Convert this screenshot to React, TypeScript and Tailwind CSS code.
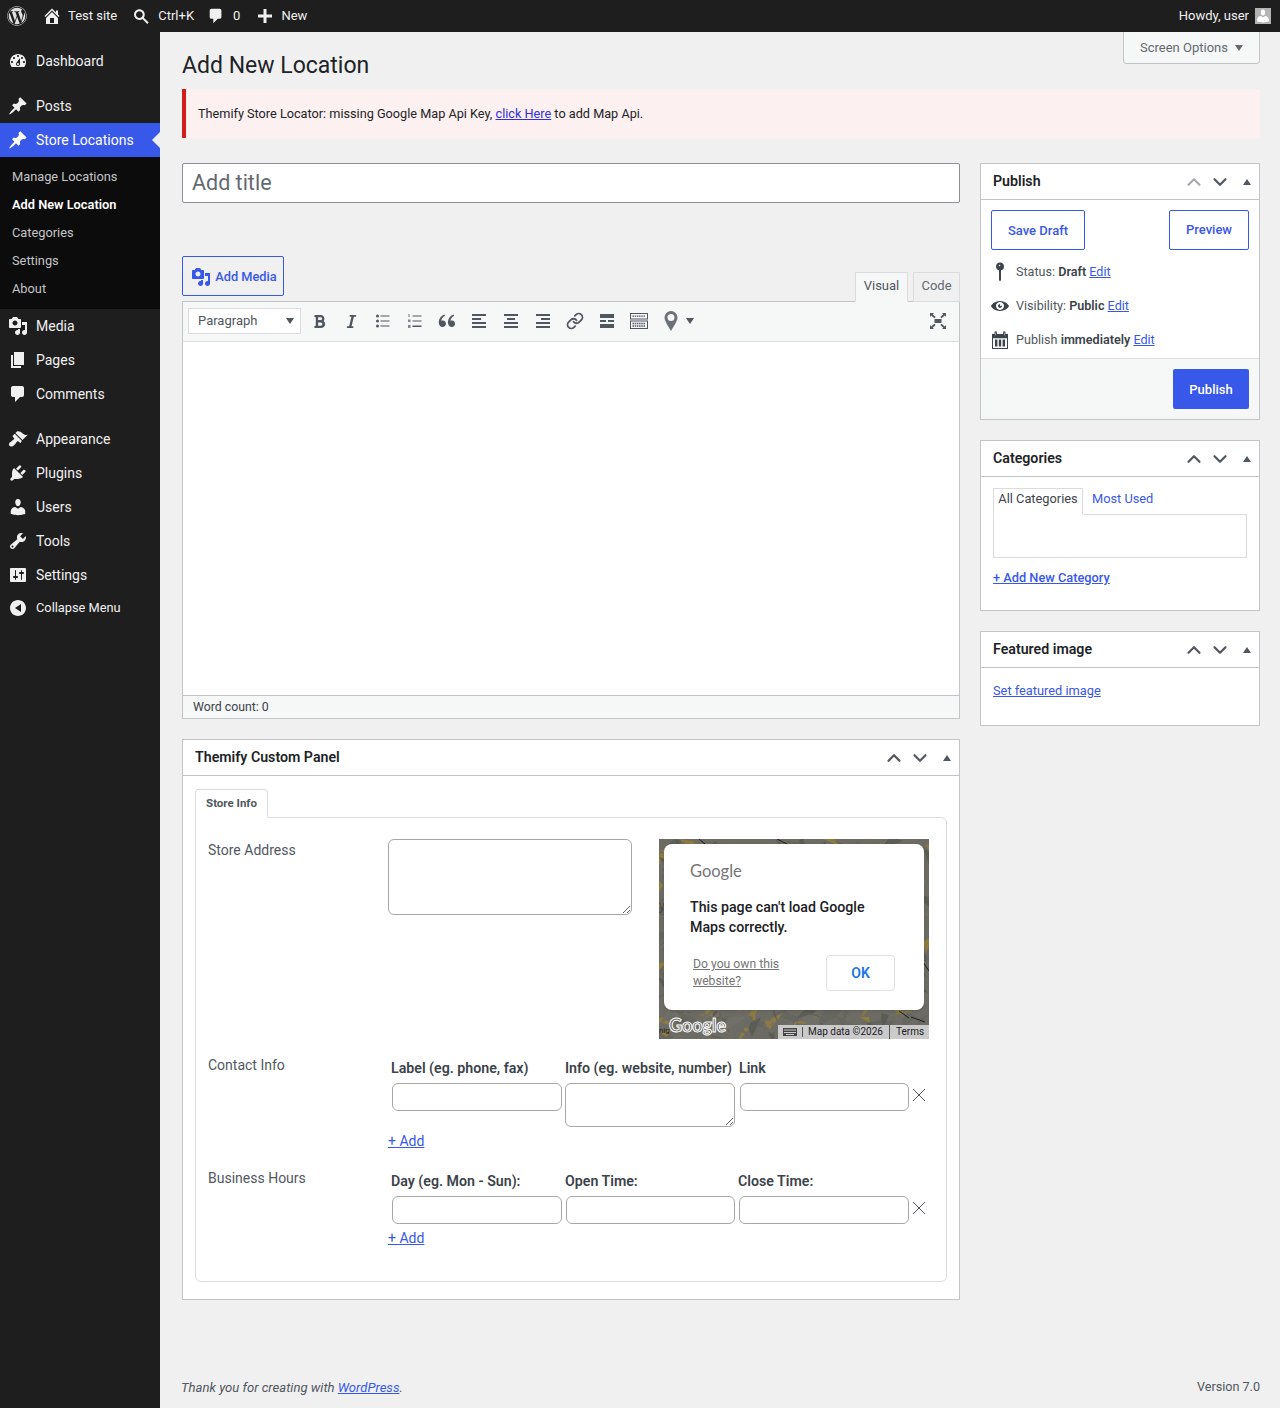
import type { ReactNode } from 'react';
import { ChevronDown, ChevronUp, Link as LinkIcon } from 'lucide-react';
import { FaBold, FaItalic, FaWordpress } from 'react-icons/fa';
import { RiDoubleQuotesL } from 'react-icons/ri';

const paths = {
  home: 'M16 8.5l1.53 1.53-1.06 1.06L10 4.62l-6.47 6.47-1.06-1.06L10 2.5l4 4v-2h2v4zm-6-2.46l6 5.99V18H4v-5.97zM12 17v-5H8v5h4z',
  pin: 'M10.44 3.02l1.82-1.82 6.36 6.35-1.83 1.82c-1.05-.68-2.48-.57-3.41.36l-.75.75c-.92.93-1.04 2.35-.35 3.41l-1.83 1.82-2.41-2.41-2.8 2.79c-.42.42-3.38 2.71-3.8 2.29s1.86-3.39 2.28-3.81l2.79-2.79L4.1 9.36l1.83-1.82c1.05.69 2.48.57 3.4-.36l.75-.75c.93-.92 1.05-2.35.36-3.41z',
  dashboard: 'M3.76 16h12.48c1.1-1.37 1.76-3.11 1.76-5 0-4.42-3.58-8-8-8s-8 3.58-8 8c0 1.89.66 3.63 1.76 5zM10 4c.55 0 1 .45 1 1s-.45 1-1 1-1-.45-1-1 .45-1 1-1zM6 6c.55 0 1 .45 1 1s-.45 1-1 1-1-.45-1-1 .45-1 1-1zm8 0c.55 0 1 .45 1 1s-.45 1-1 1-1-.45-1-1 .45-1 1-1zm-5.37 5.55L12 7v6c0 1.1-.9 2-2 2s-2-.9-2-2c0-.57.24-1.08.63-1.45zM4 10c.55 0 1 .45 1 1s-.45 1-1 1-1-.45-1-1 .45-1 1-1zm12 0c.55 0 1 .45 1 1s-.45 1-1 1-1-.45-1-1 .45-1 1-1zm-5 3c0-.55-.45-1-1-1s-1 .45-1 1 .45 1 1 1 1-.45 1-1z',
  media: 'M13 11V4c0-.55-.45-1-1-1h-1.67L9 1H5L3.67 3H2c-.55 0-1 .45-1 1v7c0 .55.45 1 1 1h10c.55 0 1-.45 1-1zM7 4.5c1.38 0 2.5 1.12 2.5 2.5S8.38 9.5 7 9.5 4.5 8.38 4.5 7 5.62 4.5 7 4.5zM14 6h5v10.5c0 1.38-1.12 2.5-2.5 2.5S14 17.88 14 16.5s1.12-2.5 2.5-2.5c.17 0 .34.02.5.05V9h-3V6zm-4 8.05V13h2v3.5c0 1.38-1.12 2.5-2.5 2.5S7 17.88 7 16.5 8.12 14 9.5 14c.17 0 .34.02.5.05z',
  page: 'M6 15V2h10v13H6zm-1 1h8v2H3V5h2v11z',
  comment: 'M5 2h9c1.1 0 2 .9 2 2v7c0 1.1-.9 2-2 2h-2l-5 5v-5H5c-1.1 0-2-.9-2-2V4c0-1.1.9-2 2-2z',
  appearance: 'M14.48 11.06L7.41 3.99l1.5-1.5c.5-.56 2.3-.47 3.51.32 1.21.8 1.43 1.28 2.91 2.1 1.18.64 2.45 1.26 4.45.85zm-.71.71L6.7 4.7 4.93 6.47c-.39.39-.39 1.02 0 1.41l1.06 1.06c.39.39.39 1.03 0 1.42-.6.6-1.43 1.11-2.21 1.69-.35.26-.7.53-1.01.84C1.43 13.23 1 14.13 1 15.5c0 1.1.9 2 2 2 1.37 0 2.27-.43 3.61-1.77.31-.31.58-.66.84-1.01.58-.78 1.09-1.61 1.69-2.21.39-.39 1.03-.39 1.42 0l1.06 1.06c.39.39 1.02.39 1.41 0z',
  plugins: 'M13.11 4.36L9.87 7.6 8 5.73l3.24-3.24c.35-.34 1.05-.2 1.56.32.52.51.66 1.21.31 1.55zm-8 1.77l.91-1.12 9.01 9.01-1.19.84c-.71.71-2.63 1.16-3.82 1.16H6.14L4.9 17.26c-.59.59-1.54.59-2.12 0-.59-.58-.59-1.53 0-2.12l1.24-1.24v-3.88c0-1.13.4-3.19 1.09-3.89zm7.26 3.97l3.24-3.24c.34-.35 1.04-.21 1.55.31.52.51.66 1.21.31 1.55l-3.24 3.25z',
  users: 'M10 9.25c-2.27 0-2.73-3.44-2.73-3.44C7 4.02 7.82 2 9.97 2c2.16 0 2.98 2.02 2.71 3.81 0 0-.41 3.44-2.68 3.44zm0 2.57L12.72 10c2.39 0 4.52 2.33 4.52 4.53v2.49s-3.65 1.13-7.24 1.13c-3.65 0-7.24-1.13-7.24-1.13v-2.49c0-2.25 1.94-4.48 4.47-4.48z',
  tools: 'M16.68 9.77c-1.34 1.34-3.3 1.67-4.95.99l-5.41 6.52c-.99.99-2.59.99-3.58 0s-.99-2.59 0-3.57l6.52-5.42c-.68-1.65-.35-3.61.99-4.95 1.28-1.28 3.12-1.62 4.72-1.06l-2.89 2.89 2.82 2.82 2.86-2.87c.53 1.58.18 3.39-1.08 4.65zM3.81 16.21c.4.39 1.04.39 1.43 0 .4-.4.4-1.04 0-1.43-.39-.4-1.03-.4-1.43 0-.39.39-.39 1.03 0 1.43z',
  settings: 'M18 16V4c0-.55-.45-1-1-1H3c-.55 0-1 .45-1 1v12c0 .55.45 1 1 1h14c.55 0 1-.45 1-1zM8 11h1c.55 0 1 .45 1 1s-.45 1-1 1H8v1.5c0 .28-.22.5-.5.5s-.5-.22-.5-.5V13H6c-.55 0-1-.45-1-1s.45-1 1-1h1V5.5c0-.28.22-.5.5-.5s.5.22.5.5V11zm5-2h-1c-.55 0-1-.45-1-1s.45-1 1-1h1V5.5c0-.28.22-.5.5-.5s.5.22.5.5V7h1c.55 0 1 .45 1 1s-.45 1-1 1h-1v5.5c0 .28-.22.5-.5.5s-.5-.22-.5-.5V9z',
  collapse: 'M18 10c0-4.42-3.58-8-8-8s-8 3.58-8 8 3.58 8 8 8 8-3.58 8-8zm-5 4l-6-4 6-4v8z',
  search: 'M12.14 4.78c1.87 1.87 2.11 4.75.72 6.88l4.83 4.83-1.41 1.41-4.83-4.83c-2.13 1.39-5.01 1.15-6.88-.72-2.15-2.15-2.15-5.62 0-7.57 2.15-2.15 5.42-2.15 7.57 0zm-1.41 1.41c-1.37-1.37-3.37-1.37-4.74 0s-1.37 3.37 0 4.74 3.37 1.37 4.74 0 1.37-3.37 0-4.74z',
  plus: 'M17 8.5h-5.5V3h-3v5.5H3v3h5.5V17h3v-5.5H17z',
  eye: 'M10 4.4C3.439 4.4 0 9.232 0 10c0 .766 3.439 5.6 10 5.6 6.56 0 10-4.834 10-5.6 0-.768-3.44-5.6-10-5.6zm0 9.907c-2.455 0-4.445-1.928-4.445-4.307S7.545 5.691 10 5.691s4.444 1.93 4.444 4.309-1.989 4.307-4.444 4.307zM10 10c-.407-.447.663-2.154 0-2.154-1.228 0-2.223.965-2.223 2.154s.995 2.154 2.223 2.154c1.227 0 2.223-.965 2.223-2.154 0-.547-1.877.379-2.223 0z',
  status: 'M10 .5a4 4 0 0 1 1 7.87V18l-1 1.5-1-1.5V8.370A4 4 0 0 1 10 .5zm-.5 2.200a.8.8 0 1 0 0 1.600.8.8 0 0 0 0-1.600z',
};

function Dash({ d, className }: { d: string; className: string }) {
  return (
    <svg viewBox="0 0 20 20" className={className} fill="currentColor" fillRule="evenodd">
      <path d={d} />
    </svg>
  );
}

function TopItem({ icon, label, gap = 'gap-2' }: { icon: string; label: string; gap?: string }) {
  return (
    <div className={`flex items-center ${gap}`}>
      <Dash d={icon} className="h-5 w-5 text-[#f0f0f1]" />
      <span>{label}</span>
    </div>
  );
}

function AdminBar() {
  return (
    <div className="flex h-8 items-center bg-[#1e1e1e] pl-[7px] pr-[9px] text-[13px] text-[#f0f0f1]">
      <FaWordpress className="mr-[15px] h-5 w-5 text-[#e0e0e0]" />
      <TopItem icon={paths.home} label="Test site" gap="gap-[6px]" />
      <div className="ml-[14px]">
        <TopItem icon={paths.search} label="Ctrl+K" gap="gap-[7px]" />
      </div>
      <div className="ml-[13px] flex items-center gap-[8px]">
        <Dash d={paths.comment} className="h-[18px] w-[18px] text-[#f0f0f1]" />
        <span>0</span>
      </div>
      <div className="ml-[15px]">
        <TopItem icon={paths.plus} label="New" gap="gap-[6px]" />
      </div>
      <div className="ml-auto flex items-center gap-[6px]">
        <span>Howdy, user</span>
        <div className="flex h-4 w-4 items-end justify-center overflow-hidden bg-[#b4b4b4]">
          <Dash d={paths.users} className="h-4 w-4 text-white" />
        </div>
      </div>
    </div>
  );
}

function MenuItem({ icon, label, active }: { icon: string; label: string; active?: boolean }) {
  return (
    <div className={`relative flex h-[34px] items-center text-[14px] ${active ? 'bg-[#3858e9] text-white' : 'text-[#f0f0f1]'}`}>
      <Dash d={icon} className={`ml-[8px] mr-[8px] h-5 w-5 ${active ? 'text-white' : 'text-[#f0f0f1]'}`} />
      <span>{label}</span>
      {active && (
        <div className="absolute right-0 top-[9px] h-0 w-0 border-y-[8px] border-r-[8px] border-y-transparent border-r-[#f0f0f1]" />
      )}
    </div>
  );
}

function Sidebar() {
  const sub = ['Manage Locations', 'Add New Location', 'Categories', 'Settings', 'About'];
  return (
    <aside className="w-40 shrink-0 bg-[#1e1e1e] pt-3">
      <MenuItem icon={paths.dashboard} label="Dashboard" />
      <div className="h-[11px]" />
      <MenuItem icon={paths.pin} label="Posts" />
      <MenuItem icon={paths.pin} label="Store Locations" active />
      <div className="bg-[#0c0c0c] py-[6px] text-[12.8px]">
        {sub.map((item) => (
          <div
            key={item}
            className={`flex h-7 items-center pl-3 ${item === 'Add New Location' ? 'font-semibold text-white' : 'text-[#c3c4c7]'}`}
          >
            {item}
          </div>
        ))}
      </div>
      <MenuItem icon={paths.media} label="Media" />
      <MenuItem icon={paths.page} label="Pages" />
      <MenuItem icon={paths.comment} label="Comments" />
      <div className="h-[11px]" />
      <MenuItem icon={paths.appearance} label="Appearance" />
      <MenuItem icon={paths.plugins} label="Plugins" />
      <MenuItem icon={paths.users} label="Users" />
      <MenuItem icon={paths.tools} label="Tools" />
      <MenuItem icon={paths.settings} label="Settings" />
      <div className="flex h-8 items-center text-[12.8px] text-[#f0f0f1]">
        <Dash d={paths.collapse} className="mx-[8px] h-5 w-5" />
        <span>Collapse Menu</span>
      </div>
    </aside>
  );
}

function Bars({ rows }: { rows: [number, number][] }) {
  return (
    <svg viewBox="0 0 20 20" className="h-5 w-5 text-[#50575e]" fill="currentColor">
      {rows.map(([x, w], i) => (
        <rect key={i} x={x} y={3 + i * 4} width={w} height="2" />
      ))}
    </svg>
  );
}

function ToolBtn({ children }: { children: ReactNode }) {
  return <div className="flex h-8 w-8 items-center justify-center text-[#50575e]">{children}</div>;
}

function Toolbar() {
  return (
    <div className="flex h-[41px] items-center border-x border-y border-[#c3c4c7] border-b-[#dcdcde] bg-[#f6f7f7] pb-[1px] pl-[5px] pr-[5px]">
      <div className="mr-[2px] flex h-[26px] w-[113px] items-center justify-between border border-[#dcdcde] bg-white pl-[9px] pr-[6px] text-[13px] text-[#50575e]">
        <span>Paragraph</span>
        <span className="h-0 w-0 border-x-[4px] border-t-[6px] border-x-transparent border-t-[#50575e]" />
      </div>
      <ToolBtn><FaBold className="h-[15px] w-[15px]" /></ToolBtn>
      <ToolBtn><FaItalic className="h-[15px] w-[15px]" /></ToolBtn>
      <ToolBtn>
        <svg viewBox="0 0 20 20" className="h-5 w-5" fill="currentColor">
          <circle cx="4.500" cy="5" r="1.500" /><circle cx="4.500" cy="10" r="1.500" /><circle cx="4.500" cy="15" r="1.500" />
          <rect x="7.500" y="4.500" width="9" height="1" /><rect x="7.500" y="9.500" width="9" height="1" /><rect x="7.500" y="14.500" width="9" height="1" />
        </svg>
      </ToolBtn>
      <ToolBtn>
        <svg viewBox="0 0 20 20" className="h-5 w-5" fill="currentColor">
          <rect x="3.500" y="3" width="1" height="3" opacity=".8" /><rect x="3" y="8.500" width="2.500" height="2.500" opacity=".7" /><rect x="3" y="14" width="2.500" height="3" opacity=".7" />
          <rect x="7.500" y="4.500" width="9" height="1" /><rect x="7.500" y="9.500" width="9" height="1" /><rect x="7.500" y="14.500" width="9" height="1.500" />
        </svg>
      </ToolBtn>
      <ToolBtn><RiDoubleQuotesL className="h-[22px] w-[22px]" /></ToolBtn>
      <ToolBtn><Bars rows={[[3, 14], [3, 9], [3, 14], [3, 14]]} /></ToolBtn>
      <ToolBtn><Bars rows={[[3, 14], [6, 8], [3, 14], [3, 14]]} /></ToolBtn>
      <ToolBtn><Bars rows={[[3, 14], [8, 9], [3, 14], [3, 14]]} /></ToolBtn>
      <ToolBtn><LinkIcon className="h-[18px] w-[18px]" strokeWidth={2.4} /></ToolBtn>
      <ToolBtn>
        <svg viewBox="0 0 20 20" className="h-5 w-5" fill="currentColor">
          <rect x="3" y="3" width="14" height="4" /><rect x="3" y="9" width="6" height="2" /><rect x="11" y="9" width="6" height="2" /><rect x="3" y="13" width="14" height="4" />
        </svg>
      </ToolBtn>
      <ToolBtn>
        <svg viewBox="0 0 20 20" className="h-5 w-5" fill="none" stroke="currentColor">
          <rect x="1.500" y="2.500" width="17" height="5.500" />
          <rect x="1.500" y="10" width="17" height="7.500" />
          <path d="M3.500 5.200h13M3.500 12.500h13M3.500 15h13" strokeDasharray="1.500 .7" strokeWidth="1.300" />
        </svg>
      </ToolBtn>
      <div className="flex w-8 items-center justify-center text-[#6b7177]">
        <svg viewBox="0 0 20 20" className="h-5 w-5" fill="currentColor" fillRule="evenodd">
          <path d="M10 0a6.500 6.500 0 0 1 6.500 6.500c0 3.500-4 9-6.500 13.500-2.500-4.500-6.500-10-6.500-13.500A6.500 6.500 0 0 1 10 0zm0 3a3.500 3.500 0 1 0 0 7 3.500 3.500 0 0 0 0-7z" />
        </svg>
      </div>
      <span className="ml-[-1px] h-0 w-0 border-x-[4px] border-t-[6px] border-x-transparent border-t-[#50575e]" />
      <div className="ml-auto flex w-8 items-center justify-center text-[#50575e]">
        <svg viewBox="0 0 20 20" className="h-5 w-5" fill="currentColor">
          <path d="M6.500 8h7v4h-7zM2 2h4L4.700 3.300l3 2.700-1.400 1.300-3-2.700L2 6zM18 2v4l-1.300-1.400-3 2.700-1.400-1.300 3-2.700L14 2zM2 18v-4l1.300 1.400 3-2.700 1.400 1.300-3 2.700L6 18zM18 18h-4l1.300-1.300-3-2.700 1.400-1.300 3 2.700L18 14z" />
        </svg>
      </div>
    </div>
  );
}

function BoxHeader({ title, dimUp }: { title: string; dimUp?: boolean }) {
  return (
    <div className="flex h-9 items-center border-b border-[#c3c4c7] px-3">
      <h2 className="text-[14.2px] font-semibold text-[#1d2327]">{title}</h2>
      <div className="ml-auto flex items-center gap-[4px] text-[#50575e]">
        <ChevronUp className={`h-[22px] w-[22px] ${dimUp ? 'text-[#a7aaad]' : ''}`} strokeWidth={2.4} />
        <ChevronDown className="h-[22px] w-[22px]" strokeWidth={2.4} />
        <span className="ml-[8px] mr-[-4px] h-0 w-0 border-x-[4px] border-b-[6px] border-x-transparent border-b-[#50575e]" />
      </div>
    </div>
  );
}

function MetaLine({ icon, children }: { icon: ReactNode; children: ReactNode }) {
  return (
    <div className="flex h-[34px] items-center gap-[7px] text-[12.6px] text-[#50575e]">
      <span className="flex w-[18px] justify-center text-[#3c434a]">{icon}</span>
      <span>{children}</span>
    </div>
  );
}

function A({ children, className = '' }: { children: ReactNode; className?: string }) {
  return <span className={`cursor-pointer text-[#3858e9] underline ${className}`}>{children}</span>;
}

function PublishBox() {
  return (
    <div className="border border-[#c3c4c7] bg-white">
      <BoxHeader title="Publish" dimUp />
      <div className="flex justify-between px-[10px] pt-[10px]">
        <button className="h-10 w-[94px] rounded-[2px] border border-[#3858e9] pt-[1px] text-[13px] font-medium text-[#3858e9]">Save Draft</button>
        <button className="h-10 w-20 rounded-[2px] border border-[#3858e9] pb-[1px] text-[13px] font-medium text-[#3858e9]">Preview</button>
      </div>
      <div className="px-[10px] pb-[1px] pt-[5px]">
        <MetaLine icon={<Dash d={paths.status} className="h-5 w-5 shrink-0" />}>Status: <b className="font-semibold text-[#3c434a]">Draft</b> <A>Edit</A></MetaLine>
        <MetaLine icon={<Dash d={paths.eye} className="h-[18px] w-[18px] shrink-0" />}>Visibility: <b className="font-semibold text-[#3c434a]">Public</b> <A>Edit</A></MetaLine>
        <MetaLine
          icon={
            <svg viewBox="0 0 18 18" className="h-[18px] w-[18px] shrink-0" fill="currentColor">
              <path d="M1 3h2.500V1.500a1.200 1.200 0 0 1 2.400 0V3h6.200V1.500a1.200 1.200 0 0 1 2.400 0V3H17v15H1zM2 7.200V17h14V7.200zM4.600 1.500V4.500h.4V1.500zM13 1.500V4.500h.4V1.500z" fillRule="evenodd" />
              <rect x="4" y="8.500" width="2.400" height="7" /><rect x="7.800" y="8.500" width="2.400" height="7" /><rect x="11.600" y="8.500" width="2.400" height="7" />
            </svg>
          }
        >
          Publish <b className="font-semibold text-[#3c434a]">immediately</b> <A>Edit</A>
        </MetaLine>
      </div>
      <div className="flex h-[61px] justify-end border-t border-[#dcdcde] bg-[#f6f7f7] pr-[10px] pt-[10px]">
        <button className="h-10 w-[76px] rounded-[2px] bg-[#3858e9] pt-[1px] text-[13px] font-medium text-white">Publish</button>
      </div>
    </div>
  );
}

function CategoriesBox() {
  return (
    <div className="border border-[#c3c4c7] bg-white">
      <BoxHeader title="Categories" />
      <div className="px-3 pb-[23px] pt-[10px] text-[12.8px]">
        <div className="flex h-[27px] items-end">
          <div className="relative top-[1px] flex h-[27px] w-[90px] items-center justify-center border border-[#dcdcde] border-b-white bg-white pb-[5px] text-[#3c434a]">All Categories</div>
          <span className="mb-[4px] ml-[9px] self-center text-[#3858e9]">Most Used</span>
        </div>
        <div className="h-[44px] border border-[#dcdcde]" />
        <div className="mt-[10px] font-medium leading-[19px]"><A>+ Add New Category</A></div>
      </div>
    </div>
  );
}

function FeaturedBox() {
  return (
    <div className="border border-[#c3c4c7] bg-white">
      <BoxHeader title="Featured image" />
      <div className="px-3 pb-[25px] pt-[13px] text-[12.8px] leading-[19px]"><A>Set featured image</A></div>
    </div>
  );
}

const field = 'block h-[28px] rounded-[6px] border border-[#a7a7a7] bg-white';

function RowX() {
  return (
    <svg viewBox="0 0 14 14" className="ml-[3px] mt-[5px] h-[14px] w-[14px] shrink-0 text-[#50575e]" fill="none" stroke="currentColor" strokeWidth="1">
      <path d="M1 1l12 12M13 1L1 13" />
    </svg>
  );
}

// the map tiles behind the dialog, only their edges show
function mapPatches() {
  const colors = ['#5c5c56', '#77705a', '#8f7a3f', '#4f7a55', '#6b6b63', '#7d6a45', '#666660', '#8a7648', '#707068', '#5a5a5a'];
  const out: { d: string; fill: string }[] = [];
  let seed = 7;
  const next = (n: number) => {
    seed = (seed * 1103 + 12345) % 65536;
    return (seed >> 3) % n;
  };
  for (let i = 0; i < 900; i++) {
    const x = next(270);
    const y = next(200);
    out.push({ d: `M${x} ${y}l${next(40) - 20} ${next(16) - 8}l${next(30) - 15} ${next(22)}z`, fill: colors[next(colors.length)] });
  }
  return out;
}

function MapBox() {
  return (
    <div className="relative ml-[27px] h-[200px] w-[270px] shrink-0 overflow-hidden bg-[#6c6c64]">
      <svg viewBox="0 0 270 200" className="h-full w-full">
        {mapPatches().map((p, i) => <path key={i} d={p.d} fill={p.fill} />)}
        <path d="M40 0l6 5M118 0l10 5M240 172l10 7M252 178l14 5M262 120l8 12" stroke="#1c1c1c" strokeWidth="1" fill="none" />
      </svg>
      <span className="absolute left-0 top-[60px] text-[12px] leading-[14px] text-[#444]">y</span>
      <span className="absolute bottom-[2px] left-0 text-[8px] leading-[12px] text-[#222]">nig</span>
      <div className="absolute left-[5px] top-[5px] h-[166px] w-[260px] rounded-[8px] bg-white shadow-sm">
        <div className="pl-[26px] pt-[15px] font-['Lato',sans-serif] text-[16.5px] leading-[24px] text-[#757575]">Google</div>
        <p className="pl-[26px] pt-[14px] text-[14.2px] font-medium leading-[20px] text-[#202124]">This page can't load Google<br />Maps correctly.</p>
        <div className="flex items-center justify-between pl-[29px] pr-[29px] pt-[18px]">
          <span className="text-[12.2px] leading-[17px] text-[#757575] underline">Do you own this<br />website?</span>
          <button className="h-9 w-[69px] rounded-[4px] border border-[#e0e0e0] text-[14px] font-semibold text-[#1a73e8]">OK</button>
        </div>
      </div>
      <span className="absolute bottom-[3px] left-[10px] font-['Lato',sans-serif] text-[18px] font-bold leading-[22px] text-[#666] [-webkit-text-stroke:1px_white]">Google</span>
      <div className="absolute bottom-0 right-0 flex h-[14px] w-[151px] items-center bg-[#cacaca] pb-[1px] text-[10px] text-[#202124]">
        <span className="flex w-[25px] justify-center border-r border-[#555]">
          <svg viewBox="0 0 14 10" className="h-[10px] w-[14px]" fill="#444"><path d="M0 1h14v8H0zM1 2.500v1h12v-1zM1 5v1h12V5zM3 7v1h8V7z" fillRule="evenodd" /></svg>
        </span>
        <span className="w-[87px] border-r border-[#555] pl-[5px]">Map data ©2026</span>
        <span className="pl-[6px]">Terms</span>
      </div>
    </div>
  );
}

function Label({ children }: { children: ReactNode }) {
  return <div className="w-[180px] shrink-0 text-[14px] leading-[20px] text-[#50575e]">{children}</div>;
}

function CustomPanel() {
  return (
    <div className="mt-5 border border-[#c3c4c7] bg-white">
      <BoxHeader title="Themify Custom Panel" />
      <div className="px-3 pb-[17px] pt-[13px]">
        <div className="relative z-10 flex h-[29px] w-[73px] items-center justify-center rounded-t-[4px] border border-[#dcdcde] border-b-white bg-white text-[11.5px] font-bold text-[#50575e]">Store Info</div>
        <div className="mt-[-1px] h-[465px] rounded-[6px] rounded-tl-none border border-[#dcdcde] px-3 pt-[21px]">
          <div className="flex h-[216px]">
            <div className="pt-[1px]"><Label>Store Address</Label></div>
            <textarea className="h-[76px] w-[244px] rounded-[6px] border border-[#a7a7a7]" />
            <MapBox />
          </div>
          <div className="flex h-[113px]">
            <Label>Contact Info</Label>
            <div className="pt-[3px]">
              <div className="grid grid-cols-[174px_174px_174px] pl-[3px] text-[14.2px] font-semibold leading-[20px] text-[#3c434a]">
                <span>Label (eg. phone, fax)</span><span>Info (eg. website, number)</span><span>Link</span>
              </div>
              <div className="mt-[5px] flex items-start pl-[4px]">
                <input className={`${field} w-[170px]`} />
                <textarea className={`${field} ml-[3px] h-[44px] w-[170px]`} />
                <input className={`${field} ml-[5px] w-[169px]`} />
                <RowX />
              </div>
              <div className="mt-[4px] h-[20px] text-[14px] leading-[20px]"><A>+ Add</A></div>
            </div>
          </div>
          <div className="flex">
            <Label>Business Hours</Label>
            <div>
              <div className="grid grid-cols-[174px_173px_174px] pl-[3px] pt-[3px] text-[14.2px] font-semibold leading-[20px] text-[#3c434a]">
                <span>Day (eg. Mon - Sun):</span><span>Open Time:</span><span>Close Time:</span>
              </div>
              <div className="mt-[5px] flex items-start pl-[4px]">
                <input className={`${field} w-[170px]`} />
                <input className={`${field} ml-[4px] w-[169px]`} />
                <input className={`${field} ml-[4px] w-[170px]`} />
                <RowX />
              </div>
              <div className="mt-[4px] text-[14px] leading-[20px]"><A>+ Add</A></div>
            </div>
          </div>
        </div>
      </div>
    </div>
  );
}

function Editor() {
  return (
    <div>
      <input placeholder="Add title" className="block h-10 w-full rounded-[2px] border border-[#8c8f94] bg-white pb-[1px] pl-[9px] text-[21.5px] placeholder:text-[#646970]" />
      <div className="mt-[53px] flex h-[45px] justify-between">
        <button className="flex h-10 w-[102px] items-center justify-center gap-[4px] rounded-[2px] border border-[#3858e9] pl-[2px] pt-[1px] text-[12.8px] font-medium text-[#3858e9]">
          <Dash d={paths.media} className="h-5 w-5" />
          Add Media
        </button>
        <div className="relative top-[1px] flex items-end gap-[5px] text-[13px]">
          <div className="flex h-[30px] w-[53px] items-center justify-center border border-[#dcdcde] border-b-[#f6f7f7] bg-[#f6f7f7] pb-[2px] text-[#50575e]">Visual</div>
          <div className="flex h-[30px] w-[47px] items-center justify-center border border-[#dcdcde] bg-[#f0f0f1] pb-[2px] text-[#646970]">Code</div>
        </div>
      </div>
      <Toolbar />
      <div className="h-[353px] border-x border-[#c3c4c7] bg-white" />
      <div className="flex h-6 items-center border border-[#c3c4c7] bg-[#f6f7f7] pl-[10px] text-[12.3px] text-[#3c434a]">Word count: 0</div>
    </div>
  );
}

export default function App() {
  return (
    <div className="flex min-h-[1408px] flex-col bg-[#f0f0f1] font-['Roboto',sans-serif]">
      <AdminBar />
      <div className="flex flex-1">
        <Sidebar />
        <main className="relative flex flex-1 flex-col pl-[22px] pr-5">
          <button className="absolute right-5 top-0 flex h-8 w-[137px] items-center gap-[7px] rounded-b-[4px] border border-t-0 border-[#c3c4c7] bg-[#f6f7f7] pl-[16px] text-[13px] text-[#646970]">
            Screen Options
            <span className="h-0 w-0 border-x-[4px] border-t-[6px] border-x-transparent border-t-[#646970]" />
          </button>
          <h1 className="h-[57px] pt-[18px] text-[23px] leading-[32px] text-[#1d2327]">Add New Location</h1>
          <div className="flex h-[49px] items-center border-l-4 border-[#d01d1d] bg-[#fcf0f1] pl-3 text-[12.7px] text-[#1d2327]">
            <span>Themify Store Locator: missing Google Map Api Key, <span className="text-[#2f2fe0] underline">click Here</span> to add Map Api.</span>
          </div>
          <div className="mt-[25px] flex gap-5">
            <div className="w-[778px]">
              <Editor />
              <CustomPanel />
            </div>
            <div className="flex w-[280px] flex-col gap-5">
              <PublishBox />
              <CategoriesBox />
              <FeaturedBox />
            </div>
          </div>
          <div className="mb-[10px] mt-auto flex h-[20px] justify-between text-[13.1px] text-[#50575e]">
            <i className="ml-[-1px]">Thank you for creating with <A>WordPress</A>.</i>
            <span className="text-[12.6px]">Version 7.0</span>
          </div>
        </main>
      </div>
    </div>
  );
}
